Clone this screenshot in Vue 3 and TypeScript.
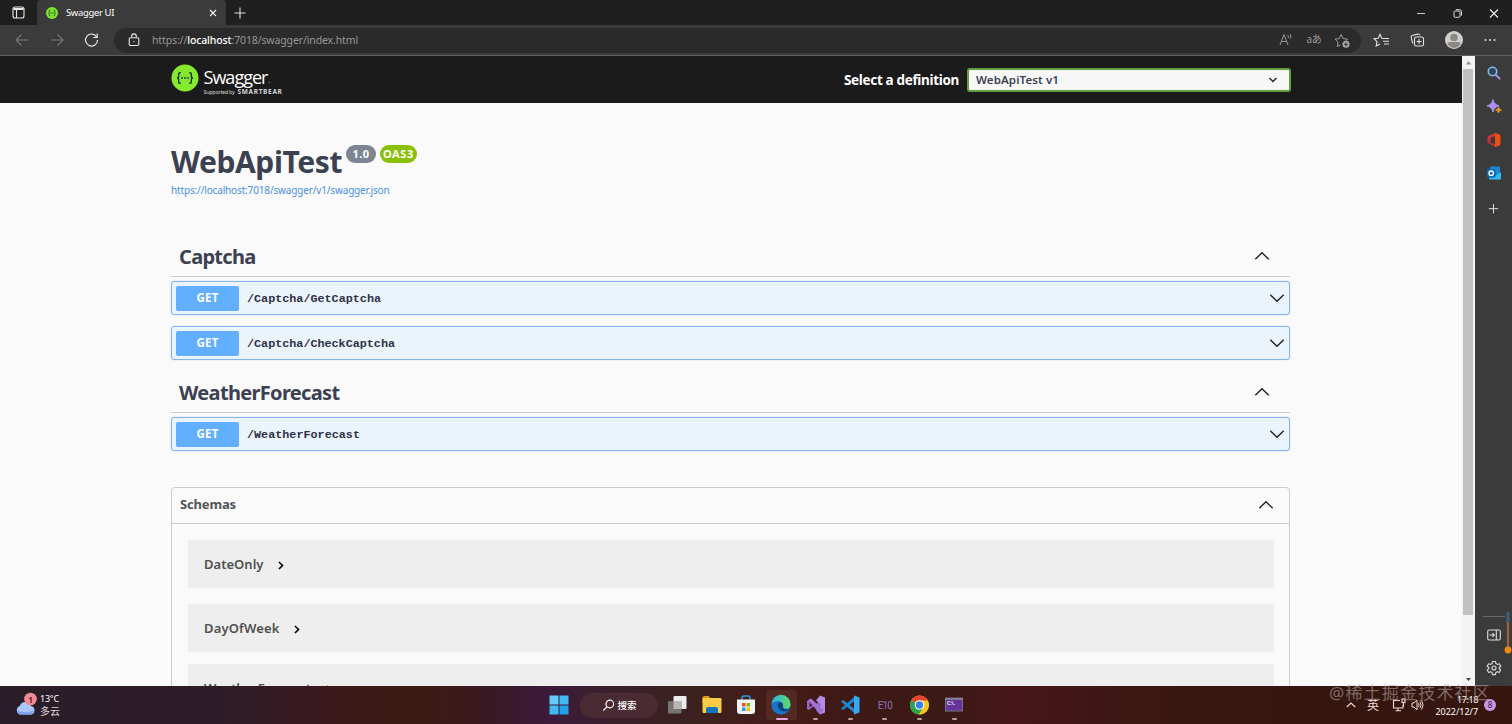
<script setup lang="ts">
import type { Directive } from 'vue'

interface Operation { path: string; width: number }
interface Tag { name: string; width: number; operations: Operation[] }
interface Model { name: string; width: number }

const tags: Tag[] = [
  {
    name: 'Captcha',
    width: 76.5,
    operations: [
      { path: '/Captcha/GetCaptcha', width: 134 },
      { path: '/Captcha/CheckCaptcha', width: 148 },
    ],
  },
  {
    name: 'WeatherForecast',
    width: 160.5,
    operations: [{ path: '/WeatherForecast', width: 113 }],
  },
]

const models: Model[] = [
  { name: 'DateOnly', width: 59.5 },
  { name: 'DayOfWeek', width: 75.5 },
  { name: 'WeatherForecast', width: 107 },
]

// Adjusts tracking so that a label occupies the given width.
const vFit: Directive<HTMLElement, number> = {
  mounted(el, binding) {
    const length = (el.textContent ?? '').trim().length
    const natural = el.getBoundingClientRect().width
    if (length > 0 && natural > 0) {
      el.style.letterSpacing = `${(binding.value - natural) / length}px`
    }
  },
}
</script>

<template>
  <div class="desktop">
    <header class="tabs">
      <div class="workspace">
        <svg width="13" height="13" viewBox="0 0 13 13" fill="none" stroke="#e8e8e8" stroke-width="1.1"><rect x="1" y="1" width="11" height="11" rx="2" /><path d="M1.5 2.5h10M1.5 3.5h10M4.5 4v8" /></svg>
      </div>
      <div class="tab">
        <svg width="12" height="12" viewBox="0 0 12 12"><circle cx="6" cy="6" r="6" fill="#7fe62c" /><path d="M4.5 3.2H4q-.7 0-.7.7v1.2L2.5 6l.8.9v1.2q0 .7.7.7h.5M7.5 3.2H8q.7 0 .7.7v1.2l.8.9-.8.9v1.2q0 .7-.7.7h-.5M4.5 6h3" fill="none" stroke="#24532b" stroke-width=".9" /></svg>
        <span v-fit="48" class="tab-name">Swagger UI</span>
        <svg class="tab-close" width="8" height="8" viewBox="0 0 8 8"><path d="M1 1l6 6M7 1L1 7" stroke="#f0f0f0" stroke-width="1.2" /></svg>
      </div>
      <svg class="new-tab" width="12" height="12" viewBox="0 0 12 12"><path d="M6 .5v11M.5 6h11" stroke="#ddd" stroke-width="1.1" /></svg>
      <div class="window-buttons">
        <svg width="36" height="24" viewBox="0 0 36 24"><path d="M13 12.500h8" stroke="#c8c8c8" /></svg>
        <svg width="36" height="24" viewBox="0 0 36 24" fill="none" stroke="#ddd"><rect x="14" y="10" width="6" height="6.3" rx="1.3" /><path d="M15.8 8.7h3.7q2 0 2 2v3.8" /></svg>
        <svg width="36" height="24" viewBox="0 0 36 24"><path d="M14 8.500l8 8M22 8.500l-8 8" stroke="#eee" stroke-width="1.1" /></svg>
      </div>
    </header>

    <nav class="toolbar">
      <svg width="35" height="24" viewBox="0 0 35 24" fill="none" stroke="#7b7b7b" stroke-width="1.1"><path d="M24 12H12M17.5 6.5L12 12l5.5 5.5" /></svg>
      <svg width="35" height="24" viewBox="0 0 35 24" fill="none" stroke="#7b7b7b" stroke-width="1.1"><path d="M12 12h12M18.5 6.5L24 12l-5.5 5.5" /></svg>
      <svg width="35" height="24" viewBox="0 0 35 24" fill="none" stroke="#e4e4e4" stroke-width="1.2"><path d="M22.8 9.2A6 6 0 1 0 23.5 12M23.2 5.5v4h-4" /></svg>
      <div class="address">
        <svg class="lock" width="12" height="14" viewBox="0 0 12 14" fill="none" stroke="#e6e6e6" stroke-width="1.1"><rect x="1.2" y="4.7" width="9.6" height="7.8" rx="1.2" /><path d="M3.7 4.5V3.2a2.3 2.3 0 0 1 4.6 0v1.3" /><circle cx="6" cy="8.6" r=".7" fill="#e6e6e6" stroke="none" /></svg>
        <span v-fit="206" class="url">https://<b>localhost</b>:7018/swagger/index.html</span>
        <div class="address-icons">
          <svg width="28" height="24" viewBox="0 0 28 24" fill="none" stroke="#969696"><path d="M8 17l4-10.5L16 17M9.4 13.5h5.2M15.7 7.2q1 1 .6 3M17.8 6q1.5 1.7.8 4.5" /></svg>
          <span class="translate">aあ</span>
          <svg width="30" height="24" viewBox="0 0 30 24" fill="none" stroke="#a0a0a0"><path d="M12.500 17L9.400 18.500l.7-4.300-3.100-3 4.300-.6L13.200 6.500l1.900 4.100 4.400.6-1.800 1.800" /><circle cx="18" cy="16.300" r="3.500" fill="#aaa" stroke="none" /><path d="M18 14.300v4M16 16.300h4" stroke="#333" /></svg>
        </div>
      </div>
      <div class="actions">
        <svg width="36" height="24" viewBox="0 0 36 24" fill="none" stroke="#e2e2e2" stroke-width="1.1"><path d="M20 10.500l-2.200-.3L16 6.300l-1.800 3.900-4.200.5 3 2.900-.8 4.300 3.800-2M20 10.500h5M19 13.300h6M20 16h5" /></svg>
        <svg width="36" height="24" viewBox="0 0 36 24" fill="none" stroke="#e2e2e2" stroke-width="1.1"><rect x="14.5" y="9" width="9" height="9" rx="1.8" /><path d="M19 11v5M16.5 13.5h5M12.8 15.5l-1.5-5.7q-.5-2 1.5-2.5l5-1.2q1.7-.4 2.3 1.2" /></svg>
        <svg width="36" height="24" viewBox="0 0 36 24"><circle cx="18" cy="12" r="9" fill="#d2d0cd" /><circle cx="18" cy="9.5" r="3.8" fill="#8c8984" /><path d="M11.500 16q0-2 2-2h9q2 0 2 2-2.500 4-6.500 4t-6.500-4" fill="#8c8984" /></svg>
        <svg width="36" height="24" viewBox="0 0 36 24" fill="#ddd"><circle cx="13.500" cy="12" r="1" /><circle cx="18" cy="12" r="1" /><circle cx="22.500" cy="12" r="1" /></svg>
      </div>
    </nav>

    <div class="window">
      <main class="page">
        <div class="topbar">
          <div class="logo">
            <svg width="28" height="28" viewBox="0 0 28 28"><circle cx="14" cy="14" r="13.500" fill="#85ea2d" /><path d="M9.800 8.800H9Q7.700 8.800 7.700 10v2.200Q7.700 14 6 14q1.700 0 1.700 1.800V18q0 1.200 1.300 1.200h.8M18.200 8.800h.8q1.300 0 1.300 1.200v2.200Q20.300 14 22 14q-1.700 0-1.700 1.800V18q0 1.200-1.300 1.200h-.8" fill="none" stroke="#173647" stroke-width="1.400" /><g fill="#173647"><circle cx="11" cy="14" r=".9" /><circle cx="14" cy="14" r=".9" /><circle cx="17" cy="14" r=".9" /></g></svg>
            <div class="logo-text">
              <div class="brand"><span v-fit="64">Swagger</span><i>.</i></div>
              <div class="support"><span v-fit="31">Supported by</span><b v-fit="45">SMARTBEAR</b></div>
            </div>
          </div>
          <span class="definition"><span v-fit="115">Select a definition</span></span>
          <div class="select">
            <span v-fit="83">WebApiTest v1</span>
            <svg width="10" height="8" viewBox="0 0 10 8" fill="none" stroke="#222" stroke-width="1.400"><path d="M1.500 2L5 5.500 8.500 2" /></svg>
          </div>
        </div>

        <div class="content">
          <div class="title">
            <h1 v-fit="171">WebApiTest</h1>
            <span class="version"><span v-fit="17">1.0</span></span>
            <span class="version oas"><span v-fit="31">OAS3</span></span>
          </div>
          <div class="spec"><a v-fit="218.500">https://localhost:7018/swagger/v1/swagger.json</a></div>

          <section v-for="tag in tags" :key="tag.name" class="tag">
            <div class="tag-head">
              <h2 v-fit="tag.width">{{ tag.name }}</h2>
              <svg width="16" height="10" viewBox="0 0 16 10" fill="none" stroke="#222" stroke-width="1.400"><path d="M1.300 8.300L8 1.700l6.700 6.600" /></svg>
            </div>
            <div v-for="op in tag.operations" :key="op.path" class="operation">
              <span class="method"><span v-fit="22">GET</span></span>
              <span v-fit="op.width" class="path">{{ op.path }}</span>
              <svg width="16" height="10" viewBox="0 0 16 10" fill="none" stroke="#222" stroke-width="1.400"><path d="M1.300 1.700L8 8.300l6.700-6.600" /></svg>
            </div>
          </section>

          <section class="schemas">
            <div class="schemas-head">
              <h4 v-fit="56">Schemas</h4>
              <svg width="16" height="10" viewBox="0 0 16 10" fill="none" stroke="#222" stroke-width="1.400"><path d="M1.300 8.300L8 1.700l6.700 6.600" /></svg>
            </div>
            <div class="models">
              <div v-for="model in models" :key="model.name" class="model">
                <span v-fit="model.width">{{ model.name }}</span>
                <svg width="6" height="9" viewBox="0 0 6 9" fill="none" stroke="#000" stroke-width="1.600"><path d="M1 1l3.500 3.500L1 8" /></svg>
              </div>
            </div>
          </section>
        </div>
      </main>

      <div class="scrollbar">
        <svg width="13" height="13" viewBox="0 0 13 13"><path d="M3.500 8.500l3-3.500 3 3.500z" fill="#999" /></svg>
        <div class="thumb"></div>
        <svg width="13" height="13" viewBox="0 0 13 13"><path d="M4 5h5L6.500 8z" fill="#444" /></svg>
      </div>

      <aside class="sidebar">
        <svg width="16" height="16" viewBox="0 0 16 16" fill="none"><path d="M9.500 9.500l4 4" stroke="#a98bdd" stroke-width="2.200" stroke-linecap="round" /><circle cx="6.500" cy="6.500" r="4.200" fill="#344456" stroke="#7dbbf0" stroke-width="1.600" /></svg>
        <svg width="16" height="16" viewBox="0 0 16 16"><path d="M7 1.500q.9 5 6 6.300Q7.900 9 7 14 6.100 9 1 7.800 6.100 6.500 7 1.500" fill="#ad8ff2" stroke="#ad8ff2" /><path d="M12.500 9q.3 2.500 3 3-2.700.5-3 3-.3-2.500-3-3 2.700-.5 3-3" fill="#d79b19" stroke="#d79b19" stroke-width=".8" /></svg>
        <svg width="16" height="16" viewBox="0 0 16 16"><path d="M9.500 1L3.500 3.300Q1.500 4.200 1.500 6v5l3-.8V6l5-2zM2 11l7.500 4v-2.500l-5-1.800z" fill="#c9353a" /><path d="M9 1l4 1.200q1.500.5 1.500 2v7.600q0 1.500-1.500 2L9 15z" fill="#ec5010" /></svg>
        <svg width="16" height="16" viewBox="0 0 16 16"><rect x="4" y="1.500" width="10" height="9" rx="1" fill="#1c87d6" /><path d="M3 7l6 4 6-4v6.500q0 1-1 1H4q-1 0-1-1z" fill="#35b8f1" /><rect x="1" y="4" width="8.500" height="8.500" rx="1" fill="#0868b8" /><circle cx="5.200" cy="8.200" r="2.200" fill="none" stroke="#fff" stroke-width="1.300" /></svg>
        <svg class="add" width="16" height="16" viewBox="0 0 16 16"><path d="M7.500 3v9.400M2.800 7.700h9.400" stroke="#ddd" /></svg>
        <div class="side-bottom">
          <svg width="16" height="16" viewBox="0 0 16 16" fill="none" stroke="#ddd" stroke-width="1.100"><rect x="1.700" y="3" width="12.600" height="10" rx="1.500" /><path d="M10.300 3v10M3.500 8h4.700M6.500 6.200L8.300 8 6.500 9.800" /></svg>
          <svg width="16" height="16" viewBox="0 0 16 16" fill="none" stroke="#ddd" stroke-width="1.100"><path d="M6.600 1.500h2.800l.5 2 1.500.9 2-.7 1.400 2.500L13.200 7.500v1.200l1.500 1.200-1.400 2.500-2-.6-1.500.8-.4 2H6.600l-.5-2-1.500-.8-2 .6-1.400-2.500 1.600-1.200V7.500L1.200 6.200l1.400-2.500 2 .7 1.500-.9z" stroke-linejoin="round" /><circle cx="8" cy="8" r="2" /></svg>
        </div>
        <svg class="gauge" width="8" height="44" viewBox="0 0 8 44"><rect x="2.300" y="0" width="3.400" height="11" rx="1.500" fill="#3b6170" /><path d="M4 10v28" stroke="#9b6046" stroke-width="2.400" /><circle cx="4" cy="38" r="3.400" fill="#f28a0d" /></svg>
      </aside>
    </div>

    <footer class="taskbar">
      <div class="weather">
        <svg width="26" height="26" viewBox="0 0 26 26"><path d="M6 22.500a4.500 4.500 0 0 1-.3-8.500A6 6 0 0 1 17 14a4.300 4.300 0 0 1-.3 8.500z" fill="#a9c8fb" /><path d="M3 18.500q8 3 17 0-.2 4-4 4H6q-2.500 0-3-4" fill="#7da5ed" /><circle cx="16.500" cy="7" r="6.300" fill="#f28b93" /><text x="16.500" y="10.500" text-anchor="middle" font-size="9" font-weight="600" fill="#442129">1</text></svg>
        <div class="weather-text"><span v-fit="19">13°C</span><span class="cjk">多云</span></div>
      </div>
      <div class="launcher">
        <svg class="start" width="20" height="20" viewBox="0 0 20 20" fill="#43b9f4"><path d="M.5.500h9v9h-9z" fill="#62ccfa" /><path d="M10.500.500h9v9h-9zM.500 10.500h9v9h-9z" /><path d="M10.500 10.500h9v9h-9z" fill="#249fe9" /></svg>
        <div class="search">
          <svg width="13" height="13" viewBox="0 0 13 13" fill="none" stroke="#fff" stroke-width="1.200"><circle cx="7.800" cy="5" r="3.800" /><path d="M5 7.800L1.300 11.500" /></svg>
          <span>搜索</span>
        </div>
        <div class="apps">
          <div class="app"><svg width="22" height="22" viewBox="0 0 22 22"><rect x="7.500" y="2" width="13" height="13" rx="1" fill="#ececec" /><rect x="2" y="7" width="13.500" height="12.500" rx="1" fill="#777574" /><path d="M7.500 7h8v8h-8z" fill="#b8b6b5" /></svg></div>
          <div class="app"><svg width="22" height="22" viewBox="0 0 22 22"><path d="M1.500 4q0-2 2-2h4l2.500 2.500V9H1.500z" fill="#dc9b17" /><rect x="1.500" y="4" width="19" height="15" rx="1.200" fill="#fccb45" /><path d="M5 19v-4q0-2 2-2h8q2 0 2 2v4z" fill="#1673bd" /></svg></div>
          <div class="app"><svg width="22" height="22" viewBox="0 0 22 22"><path d="M7 6V4q0-2 2-2h4q2 0 2 2v2" fill="none" stroke="#279bdf" stroke-width="1.500" /><path d="M2 5.500h18V17q0 3-3 3H5q-3 0-3-3z" fill="#f3f4f5" /><path d="M7 9h3.500v3.500H7z" fill="#f05023" /><path d="M11.500 9H15v3.500h-3.500z" fill="#7fba00" /><path d="M7 13.500h3.500V17H7z" fill="#16a2ed" /><path d="M11.500 13.500H15V17h-3.500z" fill="#ffb901" /></svg></div>
          <div class="app active">
            <svg width="22" height="22" viewBox="0 0 22 22">
              <defs><linearGradient id="edge-top"><stop stop-color="#2aaee4" /><stop offset="1" stop-color="#61dc66" /></linearGradient></defs>
              <circle cx="11" cy="11" r="9.500" fill="#1575c8" /><path d="M1.500 10a9.500 9.500 0 0 1 19 .5q0 4-4 4.300-4.500 0-3.500-3.500 0-4-4.500-4.300-4.500 0-7 3" fill="url(#edge-top)" /><path d="M7.500 10q1-2 3.500-1.500 2 .7 2 2.800-1.500 3.700 3.500 4 2 0 3.500-1-3 4-7.500 3-5-1.800-5-7.300" fill="#173f79" />
            </svg>
          </div>
          <div class="app open"><svg width="22" height="22" viewBox="0 0 22 22"><path d="M2 7l2-1 12 10V6L4 16l-2-1z" fill="#9965c9" /><path d="M4.500 8.500v5L7.500 11z" fill="#3c1c20" /><path d="M15 1.500l5 2v15l-5 2L11 16l4.500-4V10L11 6.500z" fill="#b789e9" /><path d="M3 6l3-1.500L18.500 16l-3 4.500z" fill="#a271d5" /></svg></div>
          <div class="app open"><svg width="22" height="22" viewBox="0 0 22 22"><path d="M2 7.500L4 6l13 10v4.500z" fill="#2389d0" /><path d="M2 14.500L4 16 17 6V1.500z" fill="#1687d1" /><path d="M15 1.500l5.500 2v15l-5.500 2z" fill="#36a9ef" /></svg></div>
          <div class="app open"><span v-fit="14" class="e10">E10</span></div>
          <div class="app open"><svg width="22" height="22" viewBox="0 0 22 22"><circle cx="11.500" cy="11" r="9.500" fill="#f8c71c" /><path d="M11.500 11L3.300 6.200a9.500 9.500 0 0 1 16.400 0z" fill="#e64332" /><path d="M11.500 11L3.300 6.200A9.500 9.500 0 0 0 11 20.500l4.500-7z" fill="#2ba24c" /><path d="M11.500 6.500h8.400q2.500 6-1.400 11-3 3-7.500 3l4.500-7z" fill="#f8c71c" /><circle cx="11.500" cy="11" r="4.800" fill="#fff" /><circle cx="11.500" cy="11" r="3.700" fill="#397fe8" /></svg></div>
          <div class="app open"><svg width="22" height="22" viewBox="0 0 22 22"><rect x="2.500" y="4" width="17" height="13" fill="#66349d" stroke="#77717d" /><path d="M2.500 5h17" stroke="#aaa" /><text x="4" y="10.500" font-size="5" font-weight="bold" fill="#eee">C:\.</text></svg></div>
        </div>
      </div>
      <div class="tray">
        <svg width="10" height="8" viewBox="0 0 10 8" fill="none" stroke="#eed5cf" stroke-width="1.200"><path d="M.8 6L5 2l4.200 4" /></svg>
        <span class="ime">英</span>
        <svg class="network" width="14" height="14" viewBox="0 0 14 14" fill="none" stroke="#f1dcd6" stroke-width="1.100"><path d="M8 2.500H1.500V10H11V7M6 10v2.500M3.500 12.700H9M11.500 4.500v4" /><rect x="10" y="1" width="3" height="3.500" /></svg>
        <svg width="13" height="12" viewBox="0 0 13 12" fill="none" stroke="#f1dcd6"><path d="M1 4h2l3-2.800v9.600L3 8H1zM7.500 4.200q1.200 1.800 0 3.600M9 2.800q2.200 3.200 0 6.400M10.600 1.400q3 4.600 0 9.200" /></svg>
        <div class="clock"><span v-fit="21">17:18</span><span v-fit="42.500">2022/12/7</span></div>
        <span class="count">8</span>
      </div>
    </footer>
    <div class="watermark"><span v-fit="162">@稀土掘金技术社区</span></div>
  </div>
</template>

<style>
body { margin: 0; overflow: hidden; }
</style>

<style scoped>
.desktop { position: relative; width: 1512px; height: 724px; overflow: hidden; display: flex; flex-direction: column; background: #fafafa; font-family: "Noto Sans", "Open Sans", "Noto Sans CJK SC", sans-serif; color: #3b4151; }
.desktop * { box-sizing: border-box; }
svg { display: block; flex: none; }
span, b, a, h1, h2, h4 { white-space: nowrap; }
h1, h2, h4 { margin: 0; }

.tabs { height: 25px; flex: none; display: flex; align-items: center; background: #1f1f1f; }
.workspace { width: 37px; padding-left: 12px; }
.tab { width: 189px; height: 25px; padding: 0 10px 0 9px; display: flex; align-items: center; background: #3b3b3b; border-radius: 4px 4px 0 0; }
.tab-name { margin-left: 8px; font-size: 9.500px; color: #fff; }
.tab-close { margin-left: auto; margin-right: -1px; }
.new-tab { margin-left: 8px; }
.window-buttons { margin-left: auto; display: flex; }

.toolbar { height: 31px; flex: none; display: flex; align-items: center; padding-left: 4px; background: #3b3b3b; border-bottom: 1px solid #606060; }
.address { width: 1247px; height: 25px; margin-left: 5px; padding-left: 14px; display: flex; align-items: center; background: #2b2b2b; border-radius: 13px; }
.url { margin-left: 12px; font-size: 10.500px; color: #979797; }
.url b { color: #fff; font-weight: 500; }
.address-icons { margin-left: auto; margin-right: 3px; display: flex; align-items: center; }
.translate { width: 28px; text-align: center; font-size: 10px; line-height: 20px; margin-top: -2px; color: #999; letter-spacing: -.3px; }
.actions { margin-left: 3px; display: flex; }

.window { height: 630px; flex: none; display: flex; }
.page { width: 1462px; height: 630px; overflow: hidden; background: #fafafa; }
.topbar { height: 47px; display: flex; align-items: center; padding: 0 171px 0 170.500px; background: #1b1b1b; }
.logo { display: flex; align-items: center; margin-top: -3px; }
.logo-text { margin: 5px 0 0 5px; }
.brand { height: 22px; display: flex; font-size: 18px; line-height: 22px; color: #fff; font-family: "Open Sans", sans-serif; }
.brand i { margin-left: 1px; font-size: 9px; line-height: 28px; color: #aaa; }
.support { height: 8px; display: flex; gap: 3px; align-items: center; color: #d4d4d4; font-size: 5.500px; line-height: 8px; }
.support b { font-size: 6.500px; }
.definition { margin-left: auto; color: #fff; font-size: 13.500px; font-weight: 700; line-height: 20px; }
.select { width: 324px; height: 24px; margin-left: 8px; padding: 0 11px 0 7px; display: flex; align-items: center; justify-content: space-between; border: 2px solid #62a03f; border-radius: 3px; background: #f7f7f7; font-size: 11.500px; font-weight: 600; }

.content { width: 1119px; margin-left: 171px; padding-top: 39px; }
.title { height: 40px; display: flex; align-items: center; }
.title h1 { font-size: 30px; line-height: 40px; }
.version { width: 30px; height: 18px; margin: -16px 0 0 4px; border-radius: 9px; background: #7d8492; color: #fff; font-size: 11px; line-height: 18px; font-weight: 700; text-align: center; }
.version.oas { width: 37px; background: #89bf04; }
.spec { height: 17px; margin-bottom: 37px; font-size: 10px; line-height: 17px; color: #4990e2; }
.tag-head { height: 41px; padding: 0 20px 0 8px; display: flex; align-items: center; justify-content: space-between; border-bottom: 1px solid #cdced1; margin-bottom: 4px; }
.tag h2 { padding-top: 1px; font-size: 20px; line-height: 30px; }
.tag + .tag { margin-top: 12px; }
.operation { height: 34px; padding: 0 4px; display: flex; align-items: center; border: 1px solid #80b5f0; border-radius: 3px; background: #ebf3fb; box-shadow: 0 0 2px rgba(0, 0, 0, .15); }
.operation + .operation { margin-top: 11px; }
.operation svg { margin-left: auto; }
.method { width: 63px; height: 25px; border-radius: 2px; background: #61affe; color: #fff; font-size: 11.500px; line-height: 24px; font-weight: 700; text-align: center; }
.path { margin-left: 8px; padding-top: 2px; font-family: "Liberation Mono", monospace; font-size: 11.750px; font-weight: 700; color: #2f3147; }
.schemas { margin-top: 36px; border: 1px solid #cbcccf; border-radius: 4px 4px 0 0; }
.schemas-head { height: 36px; padding: 0 15px 2px 8px; display: flex; align-items: center; justify-content: space-between; border-bottom: 1px solid #cbcccf; color: #505358; }
.schemas-head h4 { margin-top: -1px; font-size: 13px; line-height: 18px; }
.models { padding: 16px 15px 0 16px; }
.model { height: 48px; margin-bottom: 16px; padding: 0 16px; display: flex; align-items: center; background: #eee; font-size: 13px; line-height: 18px; font-weight: 600; color: #505050; }
.model:last-child { margin-top: -4px; }
.model svg { margin-left: 14.500px; margin-top: 3px; }

.scrollbar { width: 13px; height: 630px; display: flex; flex-direction: column; background: #f4f4f4; }
.thumb { width: 10px; height: 546px; margin: 0 0 58px 1px; background: #c1c1c1; }
.sidebar { position: relative; width: 37px; height: 630px; padding: 9px 0 0 11px; background: #3b3b3b; display: flex; flex-direction: column; gap: 17.300px; }
.add { margin-top: 3px; }
.side-bottom { width: 22px; margin: auto 0 10px -3px; padding: 10px 3px 0; border-top: 1px solid #686868; display: flex; flex-direction: column; gap: 17px; }
.gauge { position: absolute; right: 0; top: 556px; }

.taskbar { height: 38px; flex: none; display: grid; grid-template-columns: 548px 1fr auto; align-items: center; color: #fff; background: linear-gradient(90deg, #291d28 0, #2d1c28 220px, #39191f 310px, #3b1a19 350px, #3d1b12 420px, #391923 490px, #3c1a3a 545px, #3a2029 620px, #3c211e 700px, #451b17 780px, #3e1915 850px, #3b1a15 950px, #48161a 1010px, #3b1712 1120px, #35160f 1300px, #36160f 1512px); }
.weather { display: flex; align-items: center; padding-left: 14px; margin-top: -1px; }
.weather-text { display: flex; flex-direction: column; align-items: flex-start; padding-top: 1px; font-size: 9px; line-height: 12px; }
.cjk { font-size: 10px; color: #e0d6dc; }
.launcher { display: flex; align-items: center; }
.start { margin-left: .5px; }
.search { width: 78px; height: 25px; margin: 0 2.500px 0 11px; padding-left: 22px; display: flex; align-items: center; gap: 3px; border-radius: 13px; background: #4a2b33; font-size: 9.500px; font-weight: 500; }
.apps { display: grid; grid-template-columns: repeat(9, 34.600px); justify-items: center; }
.app { position: relative; width: 31px; height: 30px; display: flex; justify-content: center; align-items: center; border-radius: 3px; }
.active { background: #522923; }
.open::after, .active::after { content: ""; position: absolute; bottom: 0; left: 13px; width: 5px; height: 2px; border-radius: 1px; background: #b99e99; }
.active::after { left: 10px; width: 12px; background: #e4a5dc; }
.e10 { font-size: 10px; color: #8c72bd; font-family: Roboto, sans-serif; }
.tray { display: flex; align-items: center; padding-right: 16px; }
.ime { margin-left: 11px; font-size: 12px; color: #f1dcd6; }
.network { margin: 0 5px 0 13px; }
.clock { width: 44px; margin-left: 10px; display: flex; flex-direction: column; align-items: flex-end; padding-top: 1px; font-size: 9px; line-height: 12px; }
.count { width: 12px; height: 12px; margin-left: 6px; border-radius: 50%; background: #cb95e5; color: #35203e; font-size: 8px; line-height: 12px; text-align: center; }
.watermark { position: absolute; left: 1329px; top: 681px; width: 170px; font-size: 17px; line-height: 24px; color: rgba(180, 163, 160, .6); }
</style>
